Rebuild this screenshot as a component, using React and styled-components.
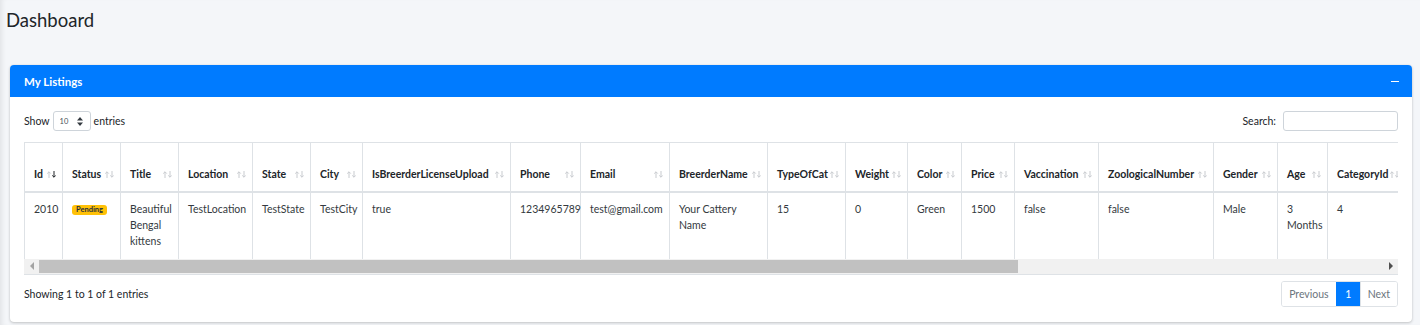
import React from 'react';
import styled, { createGlobalStyle } from 'styled-components';

const GlobalStyle = createGlobalStyle`
  html, body {
    margin: 0;
    padding: 0;
    background: #f4f6f9;
    font-family: 'Lato', 'Liberation Sans', sans-serif;
    color: #212529;
  }
  body {
    box-shadow: inset 5px 0 5px -3px rgba(0, 0, 0, 0.08);
    min-height: 325px;
  }
`;

const Page = styled.div`
  padding: 0 8px 0 10px;
`;

const PageTitle = styled.h1`
  margin: 0 0 0 -4px;
  padding-top: 9px;
  height: 65px;
  box-sizing: border-box;
  font-size: 18.5px;
  font-weight: 400;
  color: #212529;
`;

const Card = styled.div`
  background: #fff;
  border-radius: 4px;
  box-shadow: 0 0 1px rgba(0, 0, 0, 0.125), 0 1px 3px rgba(0, 0, 0, 0.2);
  overflow: hidden;
`;

const CardHeader = styled.div`
  height: 32px;
  background: #007bff;
  color: #fff;
  display: flex;
  align-items: center;
  justify-content: space-between;
  padding: 0 12px 0 14px;
`;

const CardTitle = styled.h3`
  margin: 0;
  font-size: 11.5px;
  font-weight: 700;
`;

const Collapse = styled.span`
  width: 8px;
  height: 1px;
  background: #fff;
  display: block;
  margin-right: 1px;
`;

const CardBody = styled.div`
  padding: 14px 14px 15px;
`;

const Controls = styled.div`
  display: flex;
  justify-content: space-between;
  align-items: center;
  height: 20px;
  font-size: 10.5px;
  color: #212529;
`;

const Label = styled.label`
  display: flex;
  align-items: center;
  gap: 3px;
`;

const SelectWrap = styled.span`
  position: relative;
  display: inline-block;
`;

const Select = styled.select`
  appearance: none;
  width: 38px;
  height: 20px;
  border: 1px solid #ced4da;
  border-radius: 3px;
  background: #fff;
  font-family: inherit;
  font-size: 7.5px;
  color: #495057;
  padding: 0 0 0 6px;
  margin: 0;
`;

const Caret = styled.svg`
  position: absolute;
  right: 8px;
  top: 6px;
  pointer-events: none;
`;

const SearchInput = styled.input`
  width: 115px;
  height: 20px;
  box-sizing: border-box;
  border: 1px solid #ced4da;
  border-radius: 3px;
  margin-left: 4px;
`;

const TableWrap = styled.div`
  margin-top: 11px;
  border-bottom: 1px solid #dee2e6;
`;

const ScrollArea = styled.div`
  overflow: hidden;
`;

const ScrollBar = styled.div`
  display: flex;
  align-items: center;
  height: 15px;
  background: #f1f1f1;
`;

const ScrollButton = styled.span`
  width: 15px;
  height: 15px;
  flex: none;
  display: flex;
  align-items: center;
  justify-content: center;
`;

const Track = styled.div`
  flex: 1;
  height: 13px;
  display: flex;
`;

const Thumb = styled.div`
  height: 13px;
  background: #c1c1c1;
`;

const Table = styled.table`
  border-collapse: collapse;
  table-layout: fixed;
  width: 1381px;
  font-size: 10.5px;
  line-height: 16px;
`;

const Th = styled.th`
  position: relative;
  text-align: left;
  font-weight: 700;
  vertical-align: bottom;
  height: 49px;
  box-sizing: border-box;
  padding: 0 14px 9px 9px;
  border: 1px solid #dee2e6;
  border-bottom-width: 2px;
  white-space: nowrap;
  overflow: hidden;
  color: #212529;
`;

const Td = styled.td`
  vertical-align: top;
  padding: 8px 9px 10px;
  border: 1px solid #dee2e6;
  border-top: none;
  border-bottom: none;
  color: #343a40;
  height: 48px;
`;

const Sort = styled.svg`
  position: absolute;
  right: 6px;
  bottom: 13px;
`;

const Badge = styled.span`
  display: inline-block;
  background: #ffc107;
  color: #1f2d3d;
  font-size: 7.5px;
  font-weight: 700;
  line-height: 10px;
  padding: 0 4px;
  border-radius: 3px;
  vertical-align: 1px;
`;

const Footer = styled.div`
  display: flex;
  justify-content: space-between;
  align-items: center;
  margin-top: 6px;
  font-size: 10.5px;
`;

const Pager = styled.div`
  display: flex;
  border: 1px solid #dee2e6;
  border-radius: 3px;
  overflow: hidden;
  height: 26px;
  box-sizing: border-box;
`;

const PageBtn = styled.span`
  display: flex;
  align-items: center;
  justify-content: center;
  padding: 0 7px;
  min-width: ${(p) => (p.$active ? '24px' : '0')};
  box-sizing: border-box;
  background: ${(p) => (p.$active ? '#007bff' : '#fff')};
  color: ${(p) => (p.$active ? '#fff' : '#6c757d')};
  border-left: ${(p) => (p.$first ? 'none' : '1px solid #dee2e6')};
  border-color: ${(p) => (p.$active ? '#007bff' : '#dee2e6')};
  font-size: 10.5px;
`;

const columns = [
  ['Id', 38],
  ['Status', 58],
  ['Title', 58],
  ['Location', 74],
  ['State', 58],
  ['City', 52],
  ['IsBreerderLicenseUpload', 148],
  ['Phone', 70],
  ['Email', 89],
  ['BreerderName', 98],
  ['TypeOfCat', 78],
  ['Weight', 62],
  ['Color', 54],
  ['Price', 53],
  ['Vaccination', 84],
  ['ZoologicalNumber', 115],
  ['Gender', 64],
  ['Age', 50],
  ['CategoryId', 78],
];

const row = [
  '2010',
  'Pending',
  'Beautiful Bengal kittens',
  'TestLocation',
  'TestState',
  'TestCity',
  'true',
  '1234965789',
  'test@gmail.com',
  'Your Cattery Name',
  '15',
  '0',
  'Green',
  '1500',
  'false',
  'false',
  'Male',
  '3 Months',
  '4',
];

function SortIcon({ active }) {
  const light = '#c8cbcf';
  return (
    <Sort width="9" height="7" viewBox="0 0 9 7">
      <path d="M2 7 V0.8 M0.2 2.6 L2 0.8 L3.8 2.6" fill="none" stroke={light} />
      <path d="M7 0 V6.2 M5.2 4.4 L7 6.2 L8.8 4.4" fill="none" stroke={active ? '#212529' : light} />
    </Sort>
  );
}

const VISIBLE = 1374 / 1887;

export default function App() {
  return (
    <>
      <GlobalStyle />
      <Page>
        <PageTitle>Dashboard</PageTitle>
        <Card>
          <CardHeader>
            <CardTitle>My Listings</CardTitle>
            <Collapse />
          </CardHeader>
          <CardBody>
            <Controls>
              <Label>
                Show
                <SelectWrap>
                  <Select defaultValue="10">
                    <option value="10">10</option>
                    <option value="25">25</option>
                  </Select>
                  <Caret width="6" height="9" viewBox="0 0 6 9">
                    <path d="M0 3.5 L3 0 L6 3.5 Z M0 5.5 L3 9 L6 5.5 Z" fill="#343a40" />
                  </Caret>
                </SelectWrap>
                entries
              </Label>
              <Label>
                Search:
                <SearchInput type="search" />
              </Label>
            </Controls>
            <TableWrap>
              <ScrollArea>
                <Table>
                  <colgroup>
                    {columns.map(([name, w]) => (
                      <col key={name} style={{ width: w }} />
                    ))}
                  </colgroup>
                  <thead>
                    <tr>
                      {columns.map(([name], i) => (
                        <Th key={name}>
                          {name}
                          <SortIcon active={i === 0} />
                        </Th>
                      ))}
                    </tr>
                  </thead>
                  <tbody>
                    <tr>
                      {row.map((v, i) => (
                        <Td key={i}>{i === 1 ? <Badge>{v}</Badge> : v}</Td>
                      ))}
                    </tr>
                  </tbody>
                </Table>
              </ScrollArea>
              <ScrollBar>
                <ScrollButton>
                  <svg width="4" height="8" viewBox="0 0 4 8">
                    <path d="M4 0 L0 4 L4 8 Z" fill="#a3a3a3" />
                  </svg>
                </ScrollButton>
                <Track>
                  <Thumb style={{ width: `${VISIBLE * 100}%` }} />
                </Track>
                <ScrollButton>
                  <svg width="4" height="8" viewBox="0 0 4 8">
                    <path d="M0 0 L4 4 L0 8 Z" fill="#505050" />
                  </svg>
                </ScrollButton>
              </ScrollBar>
            </TableWrap>
            <Footer>
              <span>Showing 1 to 1 of 1 entries</span>
              <Pager>
                <PageBtn $first>Previous</PageBtn>
                <PageBtn $active>1</PageBtn>
                <PageBtn>Next</PageBtn>
              </Pager>
            </Footer>
          </CardBody>
        </Card>
      </Page>
    </>
  );
}
